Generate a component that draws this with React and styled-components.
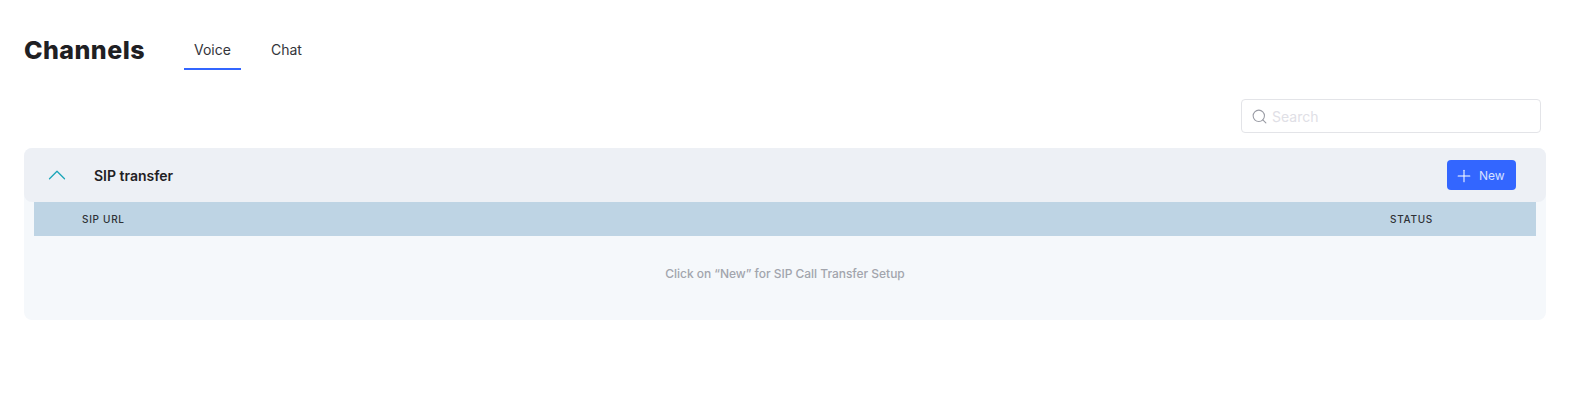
import React from "react";
import styled, { createGlobalStyle } from "styled-components";
import { Search, ChevronUp, Plus } from "lucide-react";

const GlobalStyle = createGlobalStyle`
  html, body {
    margin: 0;
    padding: 0;
    background: #fff;
    font-family: Inter, "Liberation Sans", sans-serif;
  }
`;

const Page = styled.div`
  padding: 30px 35px 0 24px;
`;

const TopBar = styled.div`
  display: flex;
  align-items: flex-start;
  height: 40px;
`;

const Title = styled.h1`
  width: 120px;
  margin: 0 40px 0 0;
  font-size: 25px;
  line-height: 40px;
  font-weight: 800;
  letter-spacing: 0.45px;
  white-space: nowrap;
  color: #1f2023;
`;

const Tabs = styled.div`
  display: flex;
  gap: 20px;
`;

const Tab = styled.div`
  box-sizing: border-box;
  height: 40px;
  padding: 0 10px;
  font-size: 14px;
  line-height: 40px;
  color: #33343a;
  border-bottom: 2px solid ${(p) => (p.$active ? "#3366ff" : "transparent")};
`;

const SearchRow = styled.div`
  display: flex;
  justify-content: flex-end;
  margin-top: 29px;
  padding-right: 5px;
`;

const SearchBox = styled.label`
  box-sizing: border-box;
  display: flex;
  align-items: center;
  gap: 4px;
  width: 300px;
  height: 34px;
  padding: 0 10px 0 9px;
  border: 1px solid #e3e4e8;
  border-radius: 4px;
  background: #fff;
  color: #9a9ca5;
`;

const SearchInput = styled.input`
  flex: 1;
  min-width: 0;
  border: 0;
  outline: 0;
  padding: 0;
  font-family: inherit;
  font-size: 14px;
  background: transparent;

  &::placeholder {
    color: #dfe0e6;
    opacity: 1;
  }
`;

const Panel = styled.section`
  margin-top: 15px;
  height: 172px;
  border-radius: 8px;
  background: #f5f8fb;
`;

const PanelHeader = styled.div`
  box-sizing: border-box;
  display: flex;
  align-items: center;
  height: 54px;
  padding: 0 30px 0 18px;
  border-radius: 8px;
  background: #edf0f5;
`;

const Toggle = styled.span`
  display: flex;
  width: 30px;
  margin-right: 22px;
  color: #1aa5b8;
`;

const PanelTitle = styled.h2`
  flex: 1;
  margin: 0;
  font-size: 14px;
  font-weight: 600;
  color: #1f2023;
`;

const NewButton = styled.button`
  display: flex;
  align-items: center;
  gap: 5px;
  box-sizing: border-box;
  width: 69px;
  height: 30px;
  padding: 1px 0 0 7px;
  border: 0;
  border-radius: 4px;
  background: #3366ff;
  color: #d6e0ff;
  font-family: inherit;
  font-size: 12px;
`;

const TableHead = styled.div`
  box-sizing: border-box;
  display: grid;
  grid-template-columns: 1fr 146px;
  align-items: center;
  height: 34px;
  margin: 0 10px;
  padding-left: 48px;
  background: #bed4e4;
`;

const HeadCell = styled.span`
  font-size: 10px;
  font-weight: 500;
  letter-spacing: 0.7px;
  color: #2e3136;
`;

const Empty = styled.p`
  margin: 0;
  padding-top: 30px;
  text-align: center;
  font-size: 12px;
  line-height: 16px;
  font-weight: 500;
  letter-spacing: -0.03px;
  color: #a2a5ad;
`;

export default function App() {
  return (
    <>
      <GlobalStyle />
      <Page>
        <TopBar>
          <Title>Channels</Title>
          <Tabs>
            <Tab $active>Voice</Tab>
            <Tab>Chat</Tab>
          </Tabs>
        </TopBar>
        <SearchRow>
          <SearchBox>
            <Search size={17} strokeWidth={1.5} />
            <SearchInput placeholder="Search" />
          </SearchBox>
        </SearchRow>
        <Panel>
          <PanelHeader>
            <Toggle>
              <ChevronUp size={30} strokeWidth={1} />
            </Toggle>
            <PanelTitle>SIP transfer</PanelTitle>
            <NewButton>
              <Plus size={20} strokeWidth={1.25} color="#fff" />
              New
            </NewButton>
          </PanelHeader>
          <TableHead>
            <HeadCell>SIP URL</HeadCell>
            <HeadCell>STATUS</HeadCell>
          </TableHead>
          <Empty>Click on “New” for SIP Call Transfer Setup</Empty>
        </Panel>
      </Page>
    </>
  );
}
